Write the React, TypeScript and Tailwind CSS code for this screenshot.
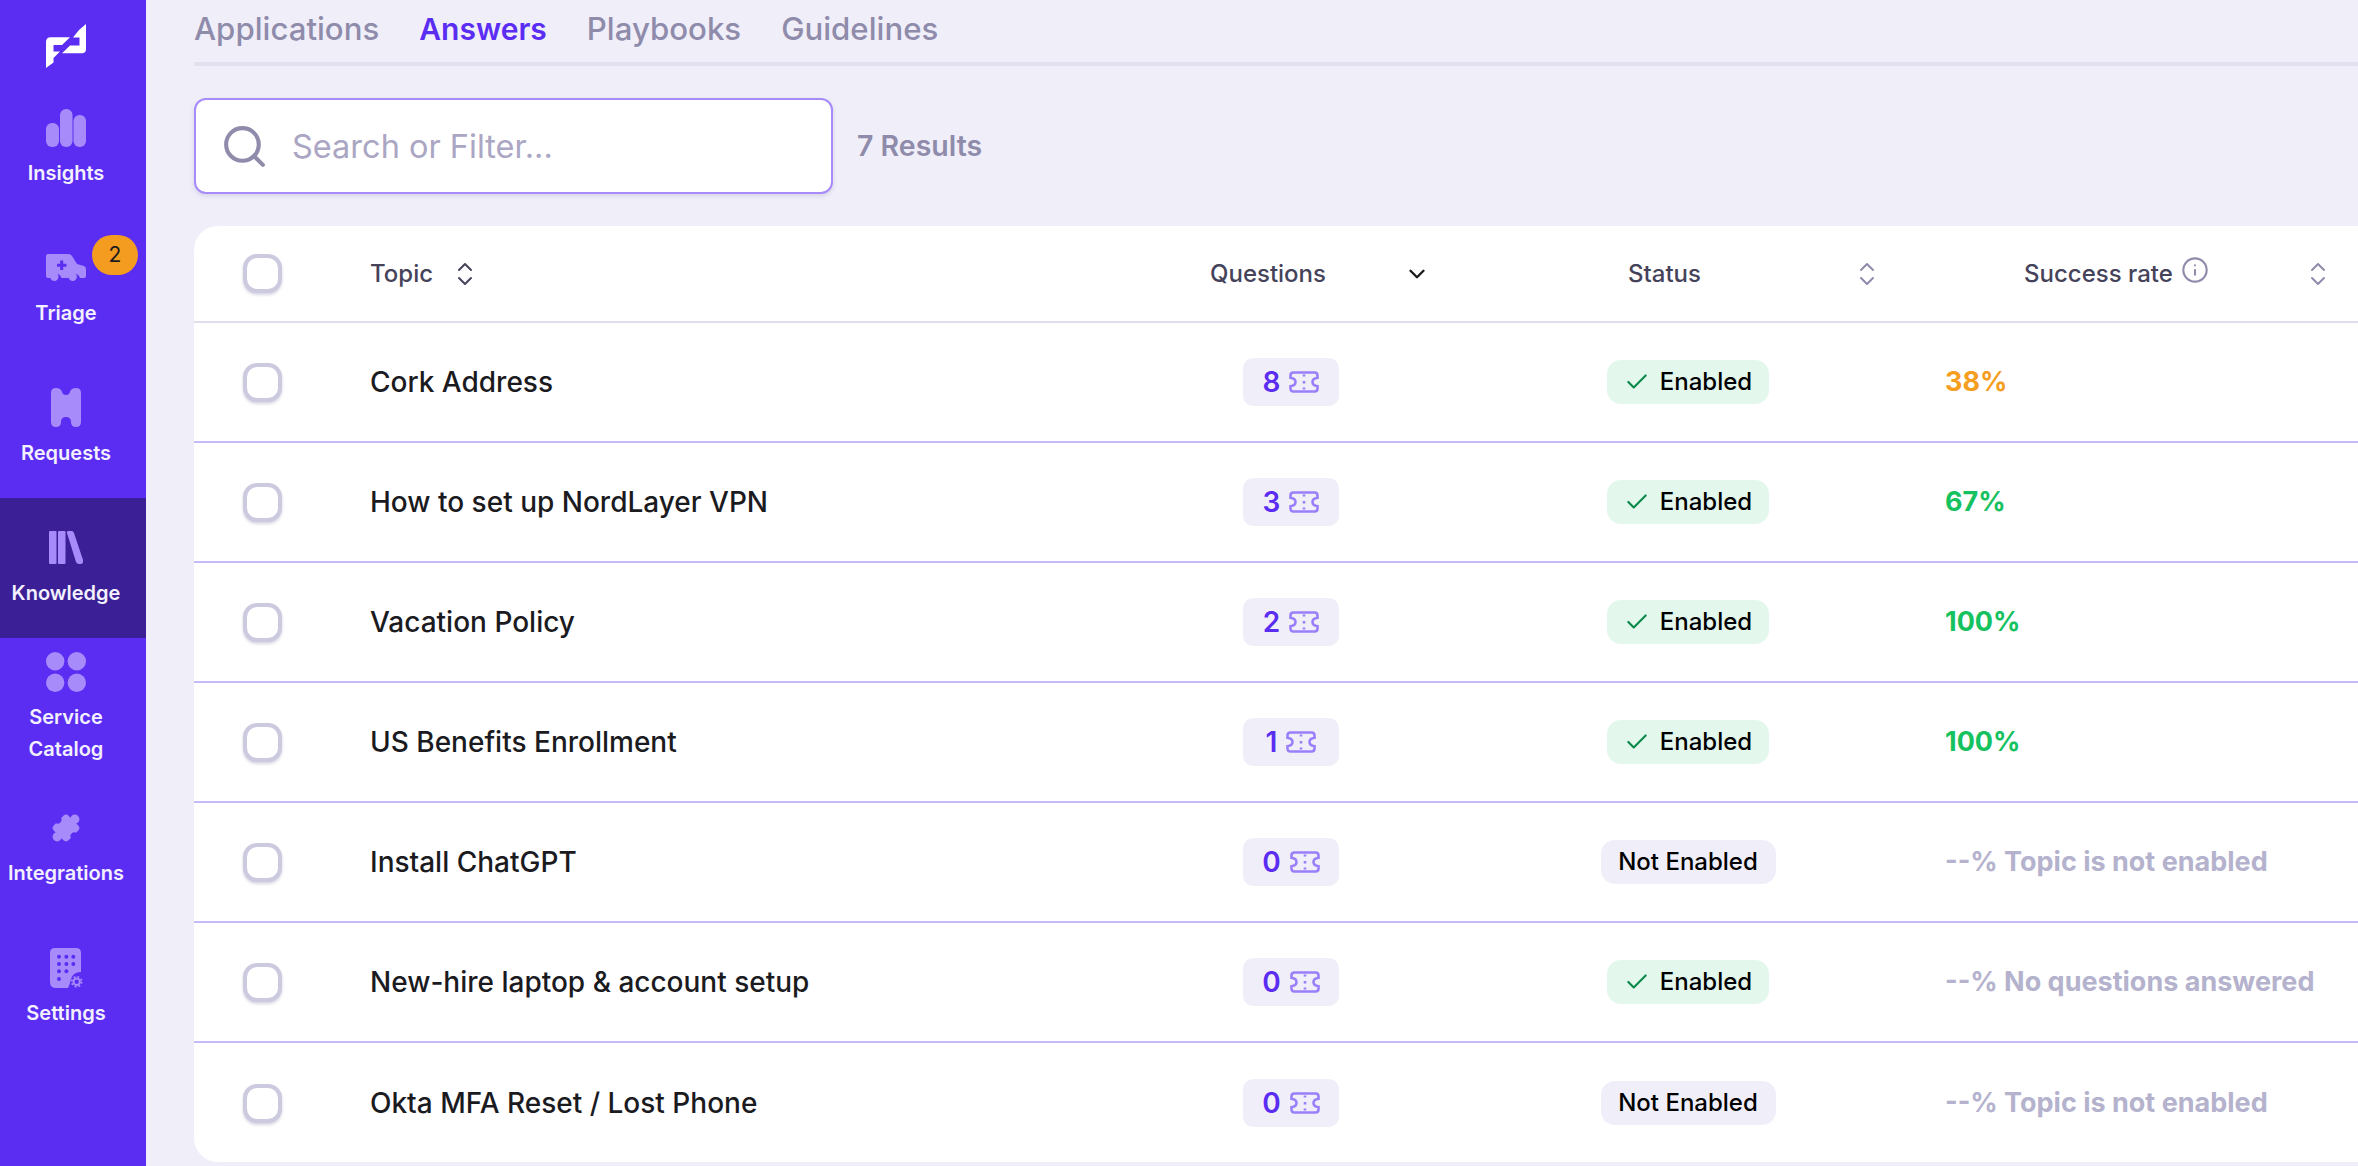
import type { ReactNode } from "react";
import { ChevronDown, Search, Check, Info } from "lucide-react";

const FONT = "font-['Inter',sans-serif]";
const COLS = "grid grid-cols-[176px_790px_300px_456px_1fr] items-center";

const LogoMark = () => (
  <svg viewBox="0 0 40 44" className="w-[40px] h-[44px]" fill="#fff">
    <path d="M40 0V25q0 4.3-4.3 4.3H16L24 21.500H33.500V13.500H27L33 6z" />
    <path d="M0 44V18q0-4.700 4.700-4.700H24L16 21H7.500V27.500H14L7.500 34v4.500z" />
  </svg>
);

const InsightsIcon = () => (
  <svg viewBox="0 0 40 38" className="w-[40px] h-[38px]" fill="#a78bfa">
    <rect x="0" y="14" width="13" height="24" rx="6" />
    <rect x="14" y="0" width="12.5" height="38" rx="6" />
    <rect x="27.5" y="6" width="12.5" height="32" rx="6" />
  </svg>
);

const TriageIcon = () => (
  <svg viewBox="0 0 40 27" className="w-[40px] h-[27px]">
    <path
      d="M2 0h20q3 0 4 2l5 8 7 2q2 1 2 3v7q0 2-2 2h-4a6 6 0 0 0-11.5 0h-7a6 6 0 0 0-11.5 0H2q-2 0-2-2V2q0-2 2-2z"
      fill="#a78bfa"
    />
    <path d="M14.2 6.5h3v3.2h3.2v3h-3.2v3.2h-3v-3.2H11v-3h3.2z" fill="#5b2df3" />
    <circle cx="8.3" cy="22.7" r="4.2" fill="#a78bfa" />
    <circle cx="26.7" cy="22.7" r="4.2" fill="#a78bfa" />
  </svg>
);

const RequestsIcon = () => (
  <svg viewBox="0 0 30 39" className="w-[30px] h-[39px]" fill="#a78bfa">
    <path d="M0 5Q0 0 5 0t6 4q1 3 4 3t4-3q1-4 6-4t5 5v29q0 5-5 5t-5-5q0-5-5-5t-5 5q0 5-5 5t-5-5z" />
  </svg>
);

const KnowledgeIcon = () => (
  <svg viewBox="0 0 34 33" className="w-[34px] h-[33px]" fill="#a78bfa">
    <rect x="0" y="0" width="7.5" height="33" rx="1" />
    <rect x="9" y="0" width="7.5" height="33" rx="1" />
    <path d="M18 2q-1-2 2-2l3 0q1 0 2 2l9 27q1 3-2 4l-2 0q-2 0-3-2z" />
  </svg>
);

const CatalogIcon = () => (
  <svg viewBox="0 0 40 40" className="w-[40px] h-[40px]" fill="#a78bfa">
    <circle cx="9.2" cy="9.2" r="9.2" />
    <circle cx="30.8" cy="9.2" r="9.2" />
    <circle cx="9.2" cy="30.8" r="9.2" />
    <circle cx="30.8" cy="30.8" r="9.2" />
  </svg>
);

const PuzzleIcon = () => (
  <svg viewBox="0 0 34 34" className="w-[34px] h-[34px]">
    <g transform="rotate(45 17 17)">
      <rect x="6.5" y="6.5" width="21" height="21" rx="4" fill="#a78bfa" />
      <circle cx="17" cy="4.5" r="4.6" fill="#a78bfa" />
      <circle cx="17" cy="29.5" r="4.6" fill="#a78bfa" />
      <circle cx="5.5" cy="17" r="3.6" fill="#5b2df3" />
      <circle cx="28.5" cy="17" r="3.6" fill="#5b2df3" />
    </g>
  </svg>
);

const SettingsIcon = () => {
  const dots = [
    [9, 8.7], [16.4, 8.7], [23.3, 8.7],
    [9, 16], [16.4, 16], [23.3, 16],
    [9, 23.3], [16.4, 23.3],
    [9, 31],
  ];
  return (
    <svg viewBox="0 0 33 40" className="w-[33px] h-[40px]">
      <path
        d="M5 0h21q5 0 5 5v19q-8 0-10 7-1 5-3 9H6q-6 0-6-6V5q0-5 5-5z"
        fill="#a78bfa"
      />
      {dots.map(([cx, cy]) => (
        <circle key={`${cx}-${cy}`} cx={cx} cy={cy} r="2" fill="#5b2df3" />
      ))}
      <circle cx="26.7" cy="33.7" r="3.2" fill="none" stroke="#a78bfa" strokeWidth="2" />
      <circle cx="26.7" cy="33.7" r="5" fill="none" stroke="#a78bfa" strokeWidth="1.6" strokeDasharray="2 1.93" />
    </svg>
  );
};

const TicketIcon = () => (
  <svg viewBox="0 0 30 22" className="w-[30px] h-[22px]" fill="none" stroke="#9a7ffa" strokeWidth="2.6">
    <path d="M4.500 1.500h21q3 0 3 3v2.300q-5 .7-5 4.200t5 4.200v2.300q0 3-3 3h-21q-3 0-3-3v-2.300q5-.7 5-4.200t-5-4.200V4.500q0-3 3-3z" />
    <path d="M15 3.500v2M15 10v2.500M15 16.500v2" />
  </svg>
);

const SortIcon = ({ color = "#45435a" }: { color?: string }) => (
  <svg viewBox="0 0 16 24" className="w-[16px] h-[24px]" fill="none" stroke={color} strokeWidth="2" strokeLinecap="round" strokeLinejoin="round">
    <path d="M2 8l6-6 6 6M2 16l6 6 6-6" />
  </svg>
);

const NAV = [
  { label: ["Insights"], icon: <InsightsIcon /> },
  { label: ["Triage"], icon: <TriageIcon />, badge: 2 },
  { label: ["Requests"], icon: <RequestsIcon /> },
  { label: ["Knowledge"], icon: <KnowledgeIcon />, active: true },
  { label: ["Service", "Catalog"], icon: <CatalogIcon /> },
  { label: ["Integrations"], icon: <PuzzleIcon /> },
  { label: ["Settings"], icon: <SettingsIcon /> },
];

const ROWS = [
  { topic: "Cork Address", count: 8, enabled: true, rate: "38%", tone: "text-[#f59e1f]" },
  { topic: "How to set up NordLayer VPN", count: 3, enabled: true, rate: "67%", tone: "text-[#16c15f]" },
  { topic: "Vacation Policy", count: 2, enabled: true, rate: "100%", tone: "text-[#16c15f]" },
  { topic: "US Benefits Enrollment", count: 1, enabled: true, rate: "100%", tone: "text-[#16c15f]" },
  { topic: "Install ChatGPT", count: 0, enabled: false, rate: "--% Topic is not enabled", tone: "text-[#b4b2cd]" },
  { topic: "New-hire laptop & account setup", count: 0, enabled: true, rate: "--% No questions answered", tone: "text-[#b4b2cd]" },
  { topic: "Okta MFA Reset / Lost Phone", count: 0, enabled: false, rate: "--% Topic is not enabled", tone: "text-[#b4b2cd]" },
];

const Checkbox = () => (
  <div className="ml-[49px] w-[39px] h-[39px] rounded-[14px] border-[4px] border-[#cccadf] bg-white shadow-[0_2px_3px_rgba(60,50,120,0.2)]" />
);

const HeaderLabel = ({ children }: { children: ReactNode }) => (
  <span className="text-[24px] font-medium text-[#45435a] leading-[28px]">{children}</span>
);

const Sidebar = () => (
  <aside className="w-[146px] shrink-0 h-full bg-[#5b2df3] flex flex-col">
    <div className="h-[78px] shrink-0 pr-[14px] flex justify-center items-start pt-[24px]">
      <LogoMark />
    </div>
    {NAV.map((item) => (
      <div
        key={item.label[0]}
        className={`relative h-[140px] shrink-0 pr-[14px] flex flex-col items-center justify-center ${item.active ? "bg-[#3a1f96]" : ""}`}
      >
        <div className="h-[40px] flex items-center justify-center">{item.icon}</div>
        <div className="mt-[9px] text-[20px] leading-[32px] font-semibold text-[#f3f0ff] text-center">
          {item.label.map((line) => (
            <div key={line}>{line}</div>
          ))}
        </div>
        {item.badge && (
          <span className="absolute left-[92px] top-[17px] w-[46px] h-[40px] rounded-full bg-[#f39c1f] text-[#1b1b1f] text-[21px] flex items-center justify-center">
            {item.badge}
          </span>
        )}
      </div>
    ))}
  </aside>
);

export default function App() {
  return (
    <div className={`${FONT} w-[2358px] h-[1166px] flex overflow-hidden bg-[#f0eff9]`}>
      <Sidebar />
      <main className="flex-1 min-w-0 pl-[48px]">
        <div className="h-[66px] flex items-start gap-[40px] border-b-[4px] border-[#e2e0ee] pt-[9px] text-[31.2px] leading-[40px] font-medium text-[#8f8bab]">
          <span>Applications</span>
          <span className="text-[#5b2df3] text-[30px] font-semibold">Answers</span>
          <span>Playbooks</span>
          <span>Guidelines</span>
        </div>
        <div className="mt-[32px] flex items-center gap-[24px]">
          <div className="w-[639px] h-[96px] rounded-[12px] border-2 border-[#a78bfa] bg-white shadow-[0_2px_5px_rgba(60,50,120,0.15)] flex items-center pl-[24px]">
            <Search className="w-[49px] h-[49px] text-[#8f8bab]" strokeWidth={2} />
            <span className="ml-[23px] mt-[2px] text-[32.5px] text-[#aaa6c3]">Search or Filter...</span>
          </div>
          <span className="mt-[1px] text-[28.5px] font-semibold text-[#8f8bab]">7 Results</span>
        </div>
        <section className="mt-[32px] bg-white rounded-l-[24px] overflow-hidden h-[936px]">
          <div className={`${COLS} h-[97px] border-b-2 border-[#e0deee]`}>
            <Checkbox />
            <div className="flex items-center gap-[24px]">
              <HeaderLabel>Topic</HeaderLabel>
              <SortIcon />
            </div>
            <div className="flex items-center pl-[50px]">
              <HeaderLabel>Questions</HeaderLabel>
              <ChevronDown className="ml-[78px] w-[26px] h-[26px] text-[#1b1b1f]" strokeWidth={2.2} />
            </div>
            <div className="flex items-center pl-[168px]">
              <HeaderLabel>Status</HeaderLabel>
              <span className="ml-[158px]">
                <SortIcon color="#8f8bab" />
              </span>
            </div>
            <div className="flex items-center pl-[108px]">
              <HeaderLabel>Success rate</HeaderLabel>
              <Info className="ml-[8px] mb-[8px] w-[28px] h-[28px] text-[#8f8bab]" strokeWidth={1.8} />
              <span className="ml-[101px]">
                <SortIcon color="#8f8bab" />
              </span>
            </div>
          </div>
          {ROWS.map((row) => (
            <div key={row.topic} className={`${COLS} h-[120px] border-b-2 border-[#c8baf8] last:border-b-0`}>
              <Checkbox />
              <span className="text-[28px] font-medium text-[#1b1b1f]">{row.topic}</span>
              <div className="pl-[83px]">
                <div className="w-[96px] h-[48px] rounded-[10px] bg-[#f0eff9] flex items-center justify-center gap-[9px]">
                  <span className="text-[28px] font-semibold text-[#5b2df3]">{row.count}</span>
                  <TicketIcon />
                </div>
              </div>
              <div className="pl-[108px] w-[348px] flex justify-center">
                {row.enabled ? (
                  <div className="w-[162px] h-[44px] rounded-[14px] bg-[#e3f7ec] flex items-center justify-center gap-[10px]">
                    <Check className="w-[26px] h-[26px] text-[#0a8a4a]" strokeWidth={2} />
                    <span className="text-[24px] font-medium text-black">Enabled</span>
                  </div>
                ) : (
                  <div className="w-[175px] h-[44px] rounded-[14px] bg-[#f0eff9] flex items-center justify-center">
                    <span className="text-[24px] font-medium text-black">Not Enabled</span>
                  </div>
                )}
              </div>
              <span className={`pl-[29px] text-[27px] font-bold ${row.tone}`}>{row.rate}</span>
            </div>
          ))}
        </section>
      </main>
    </div>
  );
}
